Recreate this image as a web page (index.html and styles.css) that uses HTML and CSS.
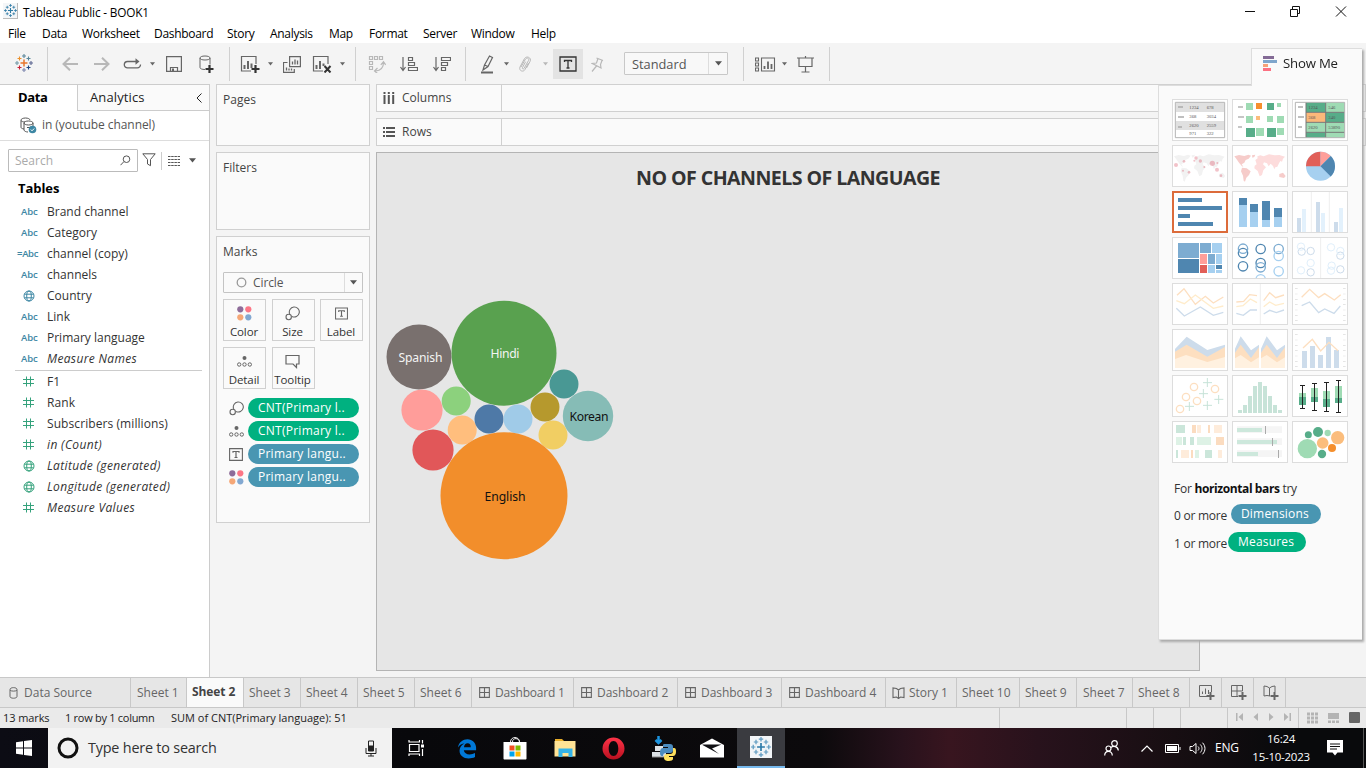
FILE: index.html
```html
<!DOCTYPE html>
<html lang="en">
<head>
<meta charset="utf-8">
<title>Tableau Public - BOOK1</title>
<link rel="stylesheet" href="styles.css">
</head>
<body>
<svg class="defs" width="0" height="0">
  <symbol id="tableau" viewBox="0 0 18 18"><g fill="none" stroke-width="1.100">
    <path class="c1" stroke-width="1.500" d="M9 5.500v7M5.500 9h7"/><path class="c2" d="M9 0v4M7 2h4"/><path class="c3" d="M9 14v4M7 16h4"/>
    <path class="c4" d="M2 7v4M0 9h4"/><path class="c5" d="M16 7v4M14 9h4"/><path class="c6" d="M4.500 2.500v4M2.500 4.500h4"/>
    <path class="c7" d="M13.500 2.500v4M11.500 4.500h4"/><path class="c8" d="M4.500 11.500v4M2.500 13.500h4"/><path class="c9" d="M13.500 11.500v4M11.500 13.500h4"/></g></symbol>
  <symbol id="caret" viewBox="0 0 6 4"><path d="M0 0h6L3 3.800z" fill="currentColor"/></symbol>
  <symbol id="grid" viewBox="0 0 12 12"><path d="M.7.7h10.600v10.600H.7zM6 .7v10.600M.7 6h10.600" fill="none" stroke="currentColor" stroke-width="1.200"/></symbol>
  <symbol id="book" viewBox="0 0 13 12"><path d="M4.500 10L1 10.500V1l3.500.5 2 1.500 2-1.500L12 1v9.500L8.500 10l-2 1.500zM6.500 3v8" fill="none" stroke="currentColor" stroke-width="1.100"/></symbol>
  <symbol id="hash" viewBox="0 0 11 11"><path d="M3.500 .5v10M7.500 .5v10M0 3.500h11M0 7.500h11" stroke="currentColor"/></symbol>
  <symbol id="globe" viewBox="0 0 12 12"><g fill="none" stroke="currentColor"><circle cx="6" cy="6" r="5"/><ellipse cx="6" cy="6" rx="2.300" ry="5"/><path d="M1.500 4.200h9M1.500 7.800h9"/></g></symbol>
  <symbol id="size" viewBox="0 0 15 15"><g fill="none" stroke="currentColor" stroke-width="1.100"><path d="M4.700 7.900A5 5 0 1 1 7 10.400"/><circle cx="3.700" cy="11" r="2.700"/></g></symbol>
  <symbol id="tbox" viewBox="0 0 14 13"><path d="M.6.600h12.800v11.800H.6z" fill="none" stroke="currentColor" stroke-width="1.100"/><path d="M4 4.800V3.500h6v1.300M7 3.500v6M5.500 9.500h3" fill="none" stroke="currentColor" stroke-width="1.200"/></symbol>
  <symbol id="detail" viewBox="0 0 15 11"><circle cx="7.500" cy="2" r="2" fill="currentColor"/><g fill="none" stroke="currentColor"><circle cx="2.200" cy="8.500" r="1.700"/><circle cx="7.500" cy="8.500" r="1.700"/><circle cx="12.800" cy="8.500" r="1.700"/></g></symbol>
  <symbol id="dots" viewBox="0 0 15 15"><circle cx="3.300" cy="3.300" r="3.100" fill="#8e6c99"/><circle cx="11.300" cy="3.300" r="3.100" fill="#fc7686"/><circle cx="3.300" cy="11.300" r="3.100" fill="#f5a777"/><circle cx="11.300" cy="11.300" r="3.100" fill="#82a8d1"/></symbol>
</svg>

<header class="titlebar">
  <span class="app-icon"><svg class="mono" width="13" height="13"><use href="#tableau"/></svg></span>
  <span class="app-title">Tableau Public - BOOK1</span>
  <svg class="win-btns" width="110" height="20" fill="none" stroke="#111"><path d="M3 9.500h10M48.500 7.500h7v7h-7zM50.500 7.500v-3h7v7h-2M94 4.500l10 10M104 4.500l-10 10"/></svg>
</header>
<nav class="menu"><span class="m1">File</span><span class="m2">Data</span><span class="m3">Worksheet</span><span class="m4">Dashboard</span><span class="m5">Story</span><span class="m6">Analysis</span><span class="m7">Map</span><span class="m8">Format</span><span class="m9">Server</span><span class="m10">Window</span><span>Help</span></nav>

<div class="toolbar">
  <div class="tgroup g0"><svg class="logo" width="18" height="18"><use href="#tableau"/></svg></div>
  <div class="tgroup g1">
    <i class="cell pale"><svg width="16" height="14"><path d="M16 7H1.500M8 .7L1.500 7 8 13.300" class="ln2"/></svg></i>
    <i class="cell pale"><svg width="16" height="14"><path d="M0 7h14.500M8 .7L14.500 7 8 13.300" class="ln2"/></svg></i>
    <i class="cell w29"><svg width="19" height="13"><path d="M13.500 3.500H4.500a3.200 3.200 0 0 0 0 6.400h9.800a3.200 3.200 0 0 0 3.200-3.400" class="ln" stroke-width="1.300"/><path d="M12.500 .2L16.500 3.500l-4 3.300z" fill="currentColor"/></svg></i>
    <i class="cell w11"><svg width="5" height="4"><use href="#caret"/></svg></i>
    <i class="cell"><svg width="16" height="16"><path d="M.6.600h14.800v14.800H.6zM4.500 15v-3.500h7V15" class="ln" stroke-width="1.200"/><path d="M6 12.500h2V15H6z" fill="currentColor"/></svg></i>
    <i class="cell"><svg width="16" height="18"><path d="M7 14.500c-3 0-5-.8-5-2V3c0-1.200 2-2 5-2s5 .8 5 2v6.500M2 3c0 1.300 2 2 5 2s5-.7 5-2" class="ln"/><path d="M11.500 10v8M7.500 14h8" stroke="#333" stroke-width="2.200"/></svg></i>
  </div>
  <div class="tgroup g2">
    <i class="cell"><svg width="20" height="18"><path d="M16 9V1.500H1.500V16H11" class="ln" stroke-width="1.200"/><path d="M4.500 14v-4M8 14V6M11.500 13V8.500" class="ln" stroke-width="2"/><path d="M15.500 10v8M11.500 14h8" stroke="#333" stroke-width="2.200"/></svg></i>
    <i class="cell w9"><svg width="5" height="4"><use href="#caret"/></svg></i>
    <i class="cell w33"><svg width="18" height="17"><path d="M6.600.600h10.800v10H6.600zM4.500 6.500h-4v9.900h10.800V13" class="ln" stroke-width="1.200"/><path d="M9.500 8.500v-3M12 8.500v-5M14.500 8.500v-4M3.500 14.500v-3M6 14.500v-2M8.500 14.500v-2" class="ln" stroke-width="1.300"/></svg></i>
    <i class="cell w28"><svg width="20" height="18"><path d="M16 9V1.500H1.500V16H11" class="ln" stroke-width="1.200"/><path d="M4.500 14v-4M8 14V6M11.500 11V8.500" class="ln" stroke-width="2"/><path d="M12.500 11l6 6.500M18.500 11l-6 6.500" stroke="#333" stroke-width="2"/></svg></i>
    <i class="cell w12"><svg width="5" height="4"><use href="#caret"/></svg></i>
  </div>
  <div class="tgroup g3">
    <i class="cell pale"><svg width="18" height="18"><path d="M1.500 1.500h3v3h-3zM6.500 1.500h3v3h-3zM11.500 1.500h3v3h-3zM1.500 6.500h3v3h-3zM1.500 11.500h3v3h-3zM15.500 7.500c0 5-3 8-8 8.500M12.800 9.800l2.700-3 2.200 3M9.500 13L6.500 16l3 2.500" class="ln" stroke-width="1.200"/></svg></i>
    <i class="cell"><svg width="18" height="16"><path d="M3 1v13M.5 11L3 14.500 5.500 11M8.500 1.500h4v3h-4zM8.500 6.500h6v3h-6zM8.500 11.500h9v3h-9z" class="ln" stroke-width="1.200"/></svg></i>
    <i class="cell w33"><svg width="18" height="16"><path d="M3 1v13M.5 11L3 14.500 5.500 11M8.500 1.500h9v3h-9zM8.500 6.500h6v3h-6zM8.500 11.500h4v3h-4z" class="ln" stroke-width="1.200"/></svg></i>
  </div>
  <div class="tgroup g4">
    <i class="cell w30"><svg width="14" height="19"><path d="M2 15l1.500-5L8.500 1l3 1.500L7 11.500zM3.500 10L7 11.500" class="ln" stroke-width="1.200"/><path d="M0 17.500h12" class="ln" stroke-width="2"/></svg></i>
    <i class="cell w6"><svg width="5" height="4"><use href="#caret"/></svg></i>
    <i class="cell pale"><svg width="14" height="17"><path d="M3 11l4.500-8c1.500-2 4-.5 3 1.500L6 12.500c-.8 1-2 .3-1.600-.8l3.200-6M10.500 7L7 13.500c-1.500 3-6.500 1.500-5-2.500L6.500 2.500c2-3 7.500-1 5.500 3L8.500 12" class="ln"/></svg></i>
    <i class="cell w9 pale"><svg width="5" height="4"><use href="#caret"/></svg></i>
    <i class="cell tbtn"><svg width="18" height="16" viewBox="0 0 18 16"><path d="M1 1h16v14H1z" class="ln" stroke-width="1.300"/><path d="M5.500 6V4.500h7V6M9 4.500V12M7.500 12h3" class="ln" stroke-width="1.300"/></svg></i>
    <i class="cell w29 pale"><svg width="13" height="15"><path d="M5.500 1l6.500 2.500M6.800 2L5.500 6 1.500 6.500 10 11 9.500 7.500 11 3.500M5.500 9L1 14.500" class="ln" stroke-width="1.200"/></svg></i>
    <div class="tselect"><span>Standard</span><b><svg width="7" height="5"><use href="#caret"/></svg></b></div>
  </div>
  <div class="tgroup g5">
    <i class="cell"><svg width="21" height="15"><path d="M.5 1h3v3h-3zM.5 6h3v3h-3zM.5 11h3v3h-3zM6.500 1h13v13h-13z" class="ln" stroke-width="1.100"/><path d="M9.500 12V9M13 12V4.500M16.500 12V7" class="ln" stroke-width="1.800"/></svg></i>
    <i class="cell w6"><svg width="5" height="4"><use href="#caret"/></svg></i>
    <i class="cell w37"><svg width="18" height="17"><path d="M0 2h17M8.500 0v2M2 2v8.500h13V2M8.500 10.500v5M4.500 16h8" class="ln" stroke-width="1.200"/></svg></i>
  </div>
</div>

<main class="work">
  <aside class="data">
    <div class="dtabs"><b>Data</b><span>Analytics<svg width="6" height="10"><path d="M5.500 .5L1 5l4.500 4.500" class="ln"/></svg></span></div>
    <div class="source"><svg width="17" height="17"><g class="ln"><path d="M4 12c-2-.3-3-1-3-1.500V3c0-1 2-2 4.500-2S10 2 10 3M1 3.500c.8 1 2 1.500 4 1.500M4 6c0-1.200 2-2 4.500-2s4.500.8 4.500 2-2 2-4.500 2S4 7.200 4 6zM4 6v7c0 1 2 2 4 2M13 6v3M7 10.500h3"/></g><circle cx="12.500" cy="12.500" r="3.800" fill="#3d87a4"/><path d="M10.800 12.500l1.200 1.300 2.200-2.300" stroke="#fff" fill="none"/></svg>in (youtube channel)</div>
    <div class="search">
      <div class="sbox"><span>Search</span><svg width="11" height="11"><circle cx="6.500" cy="4.200" r="3.300" class="ln"/><path d="M4 6.500L.5 10.200" class="ln"/></svg></div>
      <svg class="funnel" width="14" height="14"><path d="M.8.800h12.400L8.500 6.500v6.200L5.500 11V6.500z" class="ln"/></svg>
      <span class="vsep"></span>
      <svg class="list" width="12" height="10"><path d="M0 .5h12M0 3.500h12M0 6.500h12M0 9.500h12" stroke="#555" stroke-dasharray="2.500 .7"/></svg>
      <svg class="car" width="7" height="5"><use href="#caret"/></svg>
    </div>
    <h2>Tables</h2>
    <ul class="fields dim">
      <li><i>Abc</i>Brand channel</li><li><i>Abc</i>Category</li><li><i class="eq">=Abc</i>channel (copy)</li><li><i>Abc</i>channels</li>
      <li><i><svg width="12" height="12"><use href="#globe"/></svg></i>Country</li><li><i>Abc</i>Link</li><li><i>Abc</i>Primary language</li><li><i>Abc</i><em>Measure Names</em></li>
    </ul>
    <ul class="fields mea">
      <li><i><svg width="11" height="11"><use href="#hash"/></svg></i>F1</li>
      <li><i><svg width="11" height="11"><use href="#hash"/></svg></i>Rank</li>
      <li><i><svg width="11" height="11"><use href="#hash"/></svg></i>Subscribers (millions)</li>
      <li><i><svg width="11" height="11"><use href="#hash"/></svg></i><em>in (Count)</em></li>
      <li><i><svg width="12" height="12"><use href="#globe"/></svg></i><em>Latitude (generated)</em></li>
      <li><i><svg width="12" height="12"><use href="#globe"/></svg></i><em>Longitude (generated)</em></li>
      <li><i><svg width="11" height="11"><use href="#hash"/></svg></i><em>Measure Values</em></li>
    </ul>
  </aside>

  <section class="cards">
    <div class="card pages">Pages</div>
    <div class="card filters">Filters</div>
    <div class="card marks">Marks
      <div class="mselect"><svg width="11" height="11"><circle cx="5.500" cy="5.500" r="4.300" fill="none" stroke="#999" stroke-width="1.300"/></svg><span>Circle</span><b><svg width="7" height="5"><use href="#caret"/></svg></b></div>
      <div class="mbuttons">
        <div><svg width="15" height="15"><use href="#dots"/></svg>Color</div>
        <div><svg width="15" height="15"><use href="#size"/></svg>Size</div>
        <div><svg width="13" height="15"><use href="#tbox"/></svg>Label</div>
        <div><svg width="15" height="15"><use href="#detail"/></svg>Detail</div>
        <div><svg width="15" height="15"><path d="M1 1.500h13V10h-2.500v3.500L8 10H1z" class="ln" stroke-width="1.200"/></svg>Tooltip</div>
      </div>
      <div class="pills">
        <svg width="15" height="15"><use href="#size"/></svg><span class="pill green">CNT(Primary l..</span>
        <svg width="15" height="11"><use href="#detail"/></svg><span class="pill green">CNT(Primary l..</span>
        <svg width="14" height="13"><use href="#tbox"/></svg><span class="pill blue">Primary langu..</span>
        <svg width="15" height="15"><use href="#dots"/></svg><span class="pill blue">Primary langu..</span>
      </div>
    </div>
  </section>

  <section class="view">
    <div class="shelf"><span><svg width="12" height="12"><path d="M1.500 0v2M5.800 0v2M10.200 0v2M1.500 3v9M5.800 3v9M10.200 3v9" stroke="#555" stroke-width="2"/></svg>Columns</span></div>
    <div class="shelf"><span><svg width="12" height="10"><path d="M0 1h2M0 5h2M0 9h2M3 1h9M3 5h9M3 9h9" stroke="#555" stroke-width="2"/></svg>Rows</span></div>
    <div class="canvas">
      <h1>NO OF CHANNELS OF LANGUAGE</h1>
      <svg class="bubbles" width="822" height="462" viewBox="377 208 822 462">
        <circle cx="419" cy="357" r="32.500" fill="#79706e"/><circle cx="504" cy="353.200" r="52.500" fill="#59a14f"/>
        <circle cx="422" cy="410" r="20.600" fill="#ff9d9a"/><circle cx="456.200" cy="401" r="14.500" fill="#8cd17d"/>
        <circle cx="433" cy="450" r="20.600" fill="#e15759"/><circle cx="462.200" cy="430" r="14.500" fill="#ffbe7d"/>
        <circle cx="489" cy="419" r="14.500" fill="#4e79a7"/><circle cx="518" cy="419" r="14.500" fill="#a0cbe8"/>
        <circle cx="545" cy="407" r="14.500" fill="#b6992d"/><circle cx="553" cy="435" r="14.500" fill="#f1ce63"/>
        <circle cx="564" cy="384" r="14.500" fill="#499894"/><circle cx="588" cy="416" r="25.200" fill="#86bcb6"/>
        <circle cx="504" cy="495.700" r="63.500" fill="#f28e2b"/>
        <g class="blabels"><text x="420.500" y="362" textLength="44" class="lt">Spanish</text><text x="505" y="358" textLength="29" class="lt">Hindi</text><text x="589" y="421" textLength="39">Korean</text><text x="505" y="501" textLength="41">English</text></g>
      </svg>
    </div>
  </section>
</main>

<aside class="showme">
  <div class="sm-tab"><svg width="14" height="15"><path d="M0 1.500h11" stroke="#846b96" stroke-width="3"/><path d="M0 5.500h14" stroke="#7fa6cc" stroke-width="3"/><path d="M0 9.500h5" stroke="#f6a177" stroke-width="3"/><path d="M0 13.500h8" stroke="#fc7182" stroke-width="3"/></svg>Show Me</div>
  <div class="sm-body">
    <div class="thumbs">
      <svg viewBox="39 180 162 120"><path d="M46 187h148v106H46z" fill="#fff" stroke="#b4b4b4" stroke-width="3"/><path d="M48 189h144v27H48zM48 243h144v27H48z" fill="#e0e0e0"/><path d="M54 201h15M54 231h18M54 261h12" stroke="#aaa" stroke-width="5"/><g class="tt"><text x="88" y="207">1234</text><text x="140" y="207">678</text><text x="88" y="235">368</text><text x="140" y="235">3034</text><text x="88" y="262">2620</text><text x="140" y="262">2559</text><text x="88" y="286">971</text><text x="140" y="286">322</text></g></svg>
      <svg viewBox="219 180 162 120"><path d="M234 201h15M234 231h18M234 261h12" stroke="#b4b4b4" stroke-width="5"/><path d="M258 189h21v21h-21zM351 189h12v12h-12zM258 228h21v21h-21zM321 228h18v18h-18zM351 228h21v21h-21zM288 264h24v24h-24zM351 264h21v21h-21z" fill="#9fdbb4"/><path d="M321 189h21v21h-21zM258 264h27v27h-27zM321 264h27v27h-27z" fill="#57ad89"/><path d="M288 189h18v18h-18z" fill="#f58f2d"/><path d="M288 228h12v12h-12z" fill="#fbbd7c"/></svg>
      <svg viewBox="399 180 162 120"><path d="M438 187h59v30h-59zM498 217h56v30h-56zM438 277h59v16h-59z" fill="#57ad89"/><path d="M498 187h56v30h-56zM438 247h59v30h-59zM498 247h56v30h-56zM498 277h56v16h-56z" fill="#9fdbb4"/><path d="M438 217h59v30h-59z" fill="#fbb87a"/><path d="M438 187v106M497 187v106M438 217h116M438 247h116M438 277h116" stroke="#777" stroke-width="3"/><path d="M406 187h148v106H406z" fill="none" stroke="#b4b4b4" stroke-width="3"/><path d="M414 201h15M414 231h18M414 261h12" stroke="#aaa" stroke-width="5"/><g class="tt"><text x="445" y="206">1234</text><text x="505" y="206">546</text><text x="445" y="238">368</text><text x="505" y="238">340</text><text x="445" y="267">2620</text><text x="505" y="267">53890</text></g></svg>
      <svg viewBox="39 318 162 120"><path d="M42 349l14-4 16 3 12-4 8 3-7 9-9 4-4 8-8 5 5 7-4-1-9-11-6-9zM65 383l14 2 12 9-5 11-8 8-4 12-4-3-2-15-6-13zM95 346l10-2-3 7-6 2zM107 366l-2-6 7-5-1-6 9-3 10 3 16-6 17 3 14-1 17 5-6 6-3 9-5-2-4 7-5 10-6 2-3 6-4-10-7-7-6 8-5-9-9-3-3 6 9 9-8 9-4 14-7 4-6-16-10-8 1-8 6-4zM177 402l11-4 8 10-5 6-14-3z" fill="#f2f2f2"/><g fill="#d7394f" opacity=".3"><circle cx="48" cy="375" r="6"/><circle cx="72" cy="364" r="4"/><circle cx="69" cy="392" r="3"/><circle cx="87" cy="397" r="4"/><circle cx="108" cy="354" r="5"/><circle cx="103" cy="362" r="3"/><circle cx="121" cy="363" r="5"/><circle cx="133" cy="381" r="3"/><circle cx="157" cy="370" r="8"/><circle cx="172" cy="369" r="3"/><circle cx="171" cy="389" r="6"/><circle cx="183" cy="407" r="4"/></g></svg>
      <svg viewBox="219 318 162 120"><path transform="translate(181 0)" d="M42 349l14-4 16 3 12-4 8 3-7 9-9 4-4 8-8 5 5 7-4-1-9-11-6-9zM65 383l14 2 12 9-5 11-8 8-4 12-4-3-2-15-6-13zM95 346l10-2-3 7-6 2z" fill="#f6ccca"/><path transform="translate(181 0)" d="M107 366l-2-6 7-5-1-6 9-3 10 3 16-6 17 3 14-1 17 5-6 6-3 9-5-2-4 7-5 10-6 2-3 6-4-10-7-7-6 8-5-9-9-3-3 6 9 9-8 9-4 14-7 4-6-16-10-8 1-8 6-4z" fill="#fddcdc"/><path d="M358 402l11-4 8 10-5 6-14-3z" fill="#f6ccca"/></svg>
      <svg viewBox="399 318 162 120"><circle cx="481.500" cy="379" r="43.500" fill="#a6d0f0"/><path d="M481.500 379h-43.500a43.500 43.500 0 0 1 43.500-43.500z" fill="#e15f58"/><path d="M481.500 379v-43.500a43.500 43.500 0 0 1 30.800 12.700z" fill="#ff9f9a"/><path d="M481.500 379l30.800-30.800a43.500 43.500 0 0 1 0 61.600z" fill="#4f86b0"/></svg>
      <svg class="sel" viewBox="42 459 156 114"><path d="M54 480h72M54 504h132M54 528h36M54 552h105" stroke="#4f86b0" stroke-width="12"/></svg>
      <svg viewBox="219 456 162 120"><path d="M237 474h24v87h-24zM270 492h24v69h-24zM306 483h24v78h-24zM342 504h24v57h-24z" fill="#4f86b0"/><path d="M237 495h24v66h-24zM270 516h24v45h-24zM306 540h24v21h-24zM342 531h24v30h-24z" fill="#a6d0f0"/></svg>
      <svg viewBox="399 456 162 120"><path d="M454 456v120M508 456v120" stroke="#eee" stroke-width="3"/><path d="M411 534h12v42h-12zM468 486h12v90h-12zM522 546h12v30h-12z" fill="#cddceb"/><path d="M426 507h12v69h-12zM483 519h12v57h-12zM537 504h12v72h-12z" fill="#e3f1fc"/></svg>
      <svg viewBox="39 594 162 120"><path d="M54 609h63v45H54zM120 609h33v30h-33zM144 642h21v30h-21z" fill="#7dacd1"/><path d="M54 657h63v42H54zM168 675h18v12h-18z" fill="#4f86b0"/><path d="M156 609h30v30h-30zM168 642h18v30h-18zM144 675h21v24h-21zM168 690h18v9h-18z" fill="#a6d0f0"/><path d="M120 642h21v30h-21z" fill="#ff9f9a"/><path d="M120 675h21v24h-21z" fill="#e15f58"/></svg>
      <svg viewBox="219 594 162 120"><g fill="none" stroke-width="4"><g stroke="#4f86b0"><circle cx="249" cy="639" r="14"/><circle cx="249" cy="679" r="14"/><circle cx="302" cy="627" r="14"/><circle cx="302" cy="669" r="14"/></g><g stroke="#7dacd1"><circle cx="249" cy="626" r="14"/><circle cx="356" cy="627" r="14"/><circle cx="302" cy="682" r="14"/></g><g stroke="#a6d0f0"><circle cx="356" cy="648" r="14"/><circle cx="356" cy="694" r="14"/><circle cx="302" cy="718" r="14"/></g></g></svg>
      <svg viewBox="399 594 162 120"><path d="M482 594v120" stroke="#eee" stroke-width="3"/><g fill="none" stroke-width="3"><g stroke="#cddceb"><circle cx="425" cy="635" r="11"/><circle cx="452" cy="633" r="11"/><circle cx="452" cy="697" r="11"/><circle cx="541" cy="647" r="11"/><circle cx="541" cy="688" r="11"/></g><g stroke="#e0effb"><circle cx="423" cy="620" r="11"/><circle cx="452" cy="669" r="11"/><circle cx="423" cy="691" r="11"/><circle cx="513" cy="622" r="11"/><circle cx="541" cy="633" r="11"/><circle cx="515" cy="677" r="11"/><circle cx="513" cy="692" r="11"/></g></g></svg>
      <svg viewBox="39 12 162 120"><g class="tl"><path class="o" d="M51 46l21-20 34 47 30-24 24 20 30-18"/><path class="y" d="M49 62l24 9 33-26 54 40 30-7"/><path class="b" d="M49 85l24 23 48-27 39 25 30-9"/></g></svg>
      <svg viewBox="219 12 162 120"><path d="M301 12v120" stroke="#eee" stroke-width="3"/><g class="tl"><path class="o" d="M229 66l22-2 18-20 22 3M311 62l18-24 18 15 25-8"/><path class="y" d="M229 80l20-3 22-20 20 11M311 80l18-14 18 10 25-6"/><path class="b" d="M229 100l21 6 21-16h20M311 102l18-11 20 7 23-8"/></g></svg>
      <svg viewBox="399 12 162 120"><path d="M409 25v100M553 25v100" stroke="#ddd" stroke-width="8" stroke-dasharray="2 14"/><g class="tl"><path class="o" d="M425 52l24-24 27 25 18-12 29 19 19-16"/><path class="b" d="M425 77l24-11 27 32 18-11 28 13 19-22"/></g></svg>
      <svg viewBox="39 150 162 120"><path d="M45 207l35-37 62 40 53-16v70H45z" fill="#cddceb"/><path d="M45 215l35-21 62 36 53-29v63H45z" fill="#fddfc0"/><path d="M45 237l33-12 64 21 53-15v33H45z" fill="#fff1e0"/></svg>
      <svg viewBox="219 150 162 120"><g id="area"><path d="M225 206l17-37 31 42 24-17v70h-72z" fill="#cddceb"/><path d="M225 218l17-24 31 40 24-32v62h-72z" fill="#fddfc0"/><path d="M225 235l17-10 31 22 24-15v32h-72z" fill="#fff1e0"/></g><use href="#area" x="78"/></svg>
      <svg viewBox="399 150 162 120"><path d="M409 163v100M553 163v100" stroke="#ddd" stroke-width="8" stroke-dasharray="2 14"/><path d="M426 213h15v51h-15zM450 198h15v66h-15zM474 225h15v39h-15zM498 171h15v93h-15zM522 210h15v54h-15z" fill="#cddceb"/><g class="tl"><path class="o" d="M429 204l28-26 25 35 25-26 27 25"/></g></svg>
      <svg viewBox="39 288 162 120"><g fill="none" stroke="#fddfc0" stroke-width="4"><circle cx="102" cy="321" r="11"/><circle cx="165" cy="327" r="11"/><circle cx="78" cy="351" r="11"/><circle cx="111" cy="363" r="11"/><circle cx="60" cy="387" r="11"/></g><path d="M142 294v27M129 308h27M130 327v27M117 341h27M176 345v27M163 358h27M142 363v27M129 376h27M88 366v27M75 379h27" stroke="#c7e3d8" stroke-width="3"/></svg>
      <svg viewBox="219 288 162 120"><path d="M234 390h12v9h-12zM249 375h12v24h-12zM264 348h12v51h-12zM279 318h12v81h-12zM294 306h12v93h-12zM309 318h12v81h-12zM324 348h12v51h-12zM339 375h12v24h-12zM354 390h12v9h-12z" fill="#c7e3d8"/></svg>
      <svg viewBox="399 288 162 120"><path d="M417 339h21v12h-21zM453 324h21v27h-21zM489 333h21v24h-21zM525 318h21v36h-21z" fill="#9fdbb4"/><path d="M417 351h21v24h-21zM453 351h21v15h-21zM489 357h21v24h-21zM525 354h21v15h-21z" fill="#57ad89"/><path d="M427.500 317v68M420 316.500h15M420 385.500h15M463.500 311v80M456 310.500h15M456 391.500h15M499.500 308v86M492 307.500h15M492 394.500h15M535.500 302v95M528 301.500h15M528 397.500h15" stroke="#222" stroke-width="3"/></svg>
      <svg viewBox="39 426 162 120"><path d="M48 435h27v24H48zM69 471h9v24h-9zM90 471h12v24H90zM48 510h6v24h-6zM135 510h21v24h-21z" fill="#cbe6da"/><path d="M48 471h18v24H48zM111 471h42v24h-42zM105 510h12v24h-12z" fill="#def2e6"/><path d="M96 435h12v24H96zM144 435h6v24h-6zM168 471h24v24h-24zM93 510h6v24h-6z" fill="#fbdcc0"/><path d="M111 435h12v24h-12zM162 435h24v24h-24zM63 510h24v24H63zM174 510h12v24h-12z" fill="#feecdb"/></svg>
      <svg viewBox="219 426 162 120"><path d="M231 449h135M231 485h135M231 521h135" stroke="#f5f5f5" stroke-width="20"/><path d="M231 450h75M231 486h120M231 522h63" stroke="#cde8dc" stroke-width="12"/><path d="M316.500 438v24M337.500 474v24M355.500 510v24" stroke="#aaa" stroke-width="3"/></svg>
      <svg viewBox="399 426 162 120"><g fill="#57ad89"><circle cx="445" cy="464" r="10.500"/><circle cx="474" cy="456" r="15"/><circle cx="486" cy="522" r="12.500"/></g><g fill="#9fdbb4"><circle cx="442" cy="506" r="29"/><circle cx="503" cy="459" r="9.500"/></g><g fill="#fbbd7c"><circle cx="533" cy="473" r="20"/><circle cx="488" cy="489" r="17.500"/></g><circle cx="516" cy="504" r="12" fill="#f58f2d"/></svg>
    </div>
    <p class="hint">For <b>horizontal bars</b> try</p>
    <p class="hint need">0 or more <span class="pill blue">Dimensions</span></p>
    <p class="hint need n1">1 or more <span class="pill green">Measures</span></p>
  </div>
</aside>

<div class="tabs">
  <span class="src"><svg width="9" height="12"><path d="M1 2.500C1 0 8 0 8 2.500v7c0 2.300-7 2.300-7 0zM1 3c.5 1.500 6.500 1.500 7 0" class="ln"/></svg>Data Source</span>
  <span class="t56">Sheet 1</span><span class="active">Sheet 2</span><span>Sheet 3</span><span>Sheet 4</span><span>Sheet 5</span><span>Sheet 6</span>
  <span class="dash first"><svg width="11" height="11"><use href="#grid"/></svg>Dashboard 1</span><span class="dash"><svg width="11" height="11"><use href="#grid"/></svg>Dashboard 2</span><span class="dash"><svg width="11" height="11"><use href="#grid"/></svg>Dashboard 3</span><span class="dash"><svg width="11" height="11"><use href="#grid"/></svg>Dashboard 4</span>
  <span class="story"><svg width="13" height="12"><use href="#book"/></svg>Story 1</span><span class="t63">Sheet 10</span><span>Sheet 9</span><span class="t56">Sheet 7</span><span>Sheet 8</span>
  <span class="add"><svg width="16" height="15"><path d="M12.500 7V.5H.5v11H8" class="ln"/><path d="M3.500 9V6.500M6.500 9V3.500M9.500 9V5" class="ln"/><path d="M11.500 7v8M7.500 11h8" class="ln" stroke-width="2"/></svg></span>
  <span class="add"><svg width="16" height="15"><path d="M11.500 6V.5H.5v11H7M6 .5v11M.5 6h11" class="ln"/><path d="M11.500 7v8M7.500 11h8" class="ln" stroke-width="2"/></svg></span>
  <span class="add"><svg width="16" height="15"><path d="M7 11L4 10.500 1 11V1l3 .5L6.500 3 9 1.500l3-.5v6M6.500 3v8" class="ln"/><path d="M11.500 7v8M7.500 11h8" class="ln" stroke-width="2"/></svg></span>
</div>

<div class="status">
  <span class="s1">13 marks</span><span class="s2">1 row by 1 column</span><span class="s3">SUM of CNT(Primary language): 51</span>
  <i class="b1"></i><i class="b2"></i><i class="b3"></i><i class="b4"></i>
  <div class="nav"><svg width="56" height="8" fill="#b4b4b4"><path d="M0 0h1.500v8H0zM7 0v8L2.500 4zM22 0v8L17.500 4zM33 0v8l4.500-4zM48 0v8l4.500-4zM53.500 0H55v8h-1.500z"/></svg></div>
  <div class="modes"><svg width="54" height="12"><path d="M0 2h11M0 6h11M0 10h11" stroke="#b4b4b4" stroke-width="3" stroke-dasharray="3 1"/><path d="M21 1h11v6H21z" fill="#b4b4b4"/><path d="M21 9.800h11" stroke="#b4b4b4" stroke-width="2.500" stroke-dasharray="3 1"/><rect x="42" y="0" width="11" height="11" rx="1" fill="#666"/></svg></div>
</div>

<footer class="taskbar">
  <div class="start"><svg width="16" height="16" fill="#fff"><path d="M0 2.300l7-1V7.500H0zM8 1.100L16 0v7.500H8zM0 8.500h7v6.200l-7-1zM8 8.500h8V16l-8-1.100z"/></svg></div>
  <div class="tsearch"><svg width="22" height="22"><circle cx="11" cy="11" r="9" fill="none" stroke="#111" stroke-width="3"/></svg><span>Type here to search</span>
    <svg class="mic" width="12" height="17"><path d="M3.500 1h5v10h-5z" class="ln"/><path d="M3 5.500h6V11H3z" fill="#222"/><path d="M1 8v5.500h10V8M6 13.500V16M3 16h6" fill="none" stroke="#222"/></svg></div>
  <i class="app"><svg width="18" height="16" fill="none" stroke="#fff" stroke-width="1.200"><path d="M1.500 4.500h9.500v7H1.500zM1 0v2h10.500V0M1 16v-2h10.500v2M14.500 0v3.500M14.500 9v7"/><path d="M13 4.500h3v3h-3z" fill="#fff" stroke="none"/></svg></i>
  <i class="app edge"><svg width="20" height="21" viewBox="0 0 22 22"><path d="M1 10C2 4 6.500.8 11.500.8 17 .8 21 5 21 10v3H7.500c.3 3 3 4.600 6.300 4.600 2.300 0 4.200-.6 6-1.600v4.300c-2 1.100-4.500 1.600-7 1.600C7 21.900 2.800 18.500 2.800 13.400c0-3.600 2-6.300 5.400-7.900C5.500 5.700 2.800 7 1 10zM7.700 9.500h7.500C15.200 7 14 5.300 11.700 5.300 9.400 5.300 8 7 7.700 9.500z" fill="#0078d7"/></svg></i>
  <i class="app"><svg width="24" height="24"><path d="M7.500 6c0-6 9-6 9 0M9.500 6c0-5 7-4 7 0" fill="none" stroke="#eee"/><path d="M.5 6h23v16.500c0 .8-.5 1-1 1h-21c-.5 0-1-.3-1-1z" fill="#fff"/><path d="M6.500 9.500h5v5h-5z" fill="#f25022"/><path d="M12.500 9.500h5v5h-5z" fill="#7fba00"/><path d="M6.500 15.500h5v5h-5z" fill="#00a4ef"/><path d="M12.500 15.500h5v5h-5z" fill="#ffb900"/></svg></i>
  <i class="app"><svg width="22" height="20"><path d="M1 1h7l2 2h10v15H1z" fill="#e8ad29"/><path d="M.5 3h21v15.500H.5z" fill="#ffe395"/><path d="M4.500 19v-8.500h14V19h-4v-4h-6v4z" fill="#34b3e8"/></svg></i>
  <i class="app"><svg width="23" height="23"><defs><linearGradient id="op" x2="0" y2="1"><stop stop-color="#ff3348"/><stop offset="1" stop-color="#b8101f"/></linearGradient></defs><path fill-rule="evenodd" fill="url(#op)" d="M11.500.5a11 11 0 1 0 0 22 11 11 0 0 0 0-22zm0 3.500c3 0 4.800 3.200 4.800 7.500s-1.800 7.500-4.800 7.500-4.800-3.200-4.800-7.500S8.500 4 11.500 4z"/></svg></i>
  <i class="app"><svg width="25" height="25"><path d="M1 16h14v5H1zM4 10h8v5H4z" fill="#dce1e5"/><path d="M1 21h14" stroke="#888"/><path d="M7.500 0v6M4.500 4L7.500 7l3-3" stroke="#1c94df" stroke-width="2.500" fill="none"/><path d="M14 8h5c2 0 3 1 3 3v3c0 2-1 3-3 3h-4c-2 0-3 1-3 3h-1c-2 0-2-2-2-4s1-4 3-4h5v-1h-5v-2c0-1 1-1 2-1z" fill="#4b8bbe"/><path d="M22 12h1c2 0 2 2 2 4s-1 4-3 4h-4v1h4v2c0 1-2 2-4 2s-5-.5-5-3c0-3 1-4 3-4h3c2 0 3-1 3-3z" fill="#ffe15e"/></svg></i>
  <i class="app"><svg width="24" height="20"><path d="M0 7L12 .5 24 7v12.500H0z" fill="#fff"/><path d="M2.500 6.500h19L12 10.500l7 5.500L2.500 7z" fill="#101014"/></svg></i>
  <i class="app current"><b><svg class="soft" width="20" height="20"><use href="#tableau"/></svg></b></i>
  <div class="tray">
    <svg class="people" width="15" height="16" fill="none" stroke="#fff" stroke-width="1.200"><circle cx="10.500" cy="3.500" r="2.800"/><circle cx="4.500" cy="8.500" r="2.500"/><path d="M.7 15.500c0-5.500 7.600-5.500 7.600 0M7 7.500c2-2 7-1.500 7.300 3"/></svg>
    <svg class="up" width="12" height="7"><path d="M.5 6.500L6 1l5.500 5.500" fill="none" stroke="#fff" stroke-width="1.200"/></svg>
    <svg class="bat" width="16" height="9"><path d="M.5.500h13v8H.5zM15 3v3" fill="none" stroke="#fff"/><path d="M2 2h10v5H2z" fill="#fff"/></svg>
    <svg class="vol" width="17" height="13" fill="none" stroke="#fff"><path d="M1 4.500h2.500L7 1.500v10l-3.500-3H1zM9 4.500c1.300 1.300 1.300 2.700 0 4M11.300 2.500c2.300 2.500 2.300 5.500 0 8M13.500.700c3.300 3.500 3.300 8 0 11.600"/></svg>
    <span class="lang">ENG</span>
    <span class="clock">16:24<br>15-10-2023</span>
    <svg class="note" width="16" height="16"><path d="M0 0h16v12.500h-5.500L8 15.500l-2.500-3H0z" fill="#fff"/><path d="M3 4h10M3 6.500h10M3 9h7" stroke="#111"/></svg>
    <span class="peek"></span>
  </div>
</footer>
</body>
</html>
```

FILE: styles.css
```css
* { box-sizing: border-box; }
body { margin: 0; width: 1366px; height: 768px; overflow: hidden; display: flex; flex-direction: column; position: relative; background: #f4f4f4; color: #333; font: 12px/16px "Open Sans", "Noto Sans", sans-serif; }
svg { display: block; flex: none; }
.defs { position: absolute; }
i, em { font-style: normal; }
h1, h2, p, ul { margin: 0; padding: 0; list-style: none; }
.ln { fill: none; stroke: currentColor; }
.ln2 { fill: none; stroke: currentColor; stroke-width: 2; }

/* Tableau mark: each cross takes its own colour, or the current one */
.c1 { stroke: var(--c1, currentColor); } .c2 { stroke: var(--c2, currentColor); } .c3 { stroke: var(--c3, currentColor); }
.c4 { stroke: var(--c4, currentColor); } .c5 { stroke: var(--c5, currentColor); } .c6 { stroke: var(--c6, currentColor); }
.c7 { stroke: var(--c7, currentColor); } .c8 { stroke: var(--c8, currentColor); } .c9 { stroke: var(--c9, currentColor); }
.logo { --c1: #e8762b; --c2: #5b879b; --c3: #7b84ad; --c4: #7199a6; --c5: #5b6591; --c6: #eb912c; --c7: #59879b; --c8: #c72035; --c9: #1f447e; }
.mono { color: #2f7ba6; }
.soft { color: #5d9ac0; --c1: #2d7aa8; }

/* Title bar and menu */
.titlebar { height: 24px; flex: none; background: #fff; display: flex; align-items: center; color: #000; }
.app-icon { width: 15px; height: 16px; margin: -2px 5px 0 3px; display: grid; place-items: center; background: #f4f6f8; border: solid #bbb; border-width: 0 1px 1px 0; }
.app-title { font-size: 11.8px; letter-spacing: -.18px; }
.win-btns { margin-left: auto; margin-right: 14px; }
.menu { height: 19px; flex: none; background: #fff; padding-left: 8px; display: flex; color: #000; font-size: 12px; letter-spacing: -.3px; line-height: 19px; white-space: nowrap; }
.m1 { width: 34px; } .m2 { width: 40px; } .m3 { width: 72px; } .m4 { width: 73px; } .m5 { width: 43px; } .m6 { width: 59px; } .m7 { width: 40px; } .m8 { width: 54px; } .m9 { width: 48px; } .m10 { width: 60px; }

/* Toolbar */
.toolbar { height: 41px; flex: none; display: flex; color: #666; padding-bottom: 3px; }
.tgroup { display: flex; align-items: center; border-right: 1px solid #d0d0d0; margin-top: 4px; }
.g0 { width: 48px; padding-left: 15px; }
.g0 .logo { margin-top: -2px; }
.g1 { width: 182px; padding-left: 6px; } .g2 { width: 126px; padding-left: 4px; } .g3 { width: 110px; padding-left: 5px; } .g4 { width: 278px; padding-left: 7px; } .g5 { width: 86px; padding-left: 5px; }
.cell { width: 32px; display: grid; place-items: center; }
.w6 { width: 6px; } .w9 { width: 9px; } .w11 { width: 11px; } .w12 { width: 12px; } .w28 { width: 28px; } .w29 { width: 29px; } .w30 { width: 30px; } .w33 { width: 33px; } .w37 { width: 37px; }
.pale { color: #b8b8b8; }
.tbtn { width: 30px; height: 30px; margin-left: 3px; background: #e3e3e3; color: #333; }
.tselect { width: 104px; height: 23px; margin: -1px 0 0 12px; border: 1px solid #c8c8c8; border-radius: 1px; background: #f8f8f8; display: flex; align-items: center; color: #555; font-size: 12.8px; padding-left: 7px; }
.tselect b, .mselect b { margin-left: auto; width: 19px; align-self: stretch; display: grid; place-items: center; border-left: 1px solid #ddd; }

/* Workspace */
.work { height: 593px; flex: none; display: flex; }
.data { width: 210px; background: #fff; border: solid #ccc; border-width: 1px 1px 0 0; flex: none; }
.dtabs { height: 26px; display: flex; font-size: 13px; line-height: 25px; color: #000; }
.dtabs b { width: 77px; padding-left: 18px; letter-spacing: -.35px; }
.dtabs span { flex: 1; border: solid #ccc; border-width: 0 0 1px 1px; background: #fafafa; padding: 0 7px 0 12px; display: flex; align-items: center; justify-content: space-between; color: #222; letter-spacing: .12px; }
.source { height: 30px; border-bottom: 1px solid #ddd; padding: 0 0 1px 20px; display: flex; align-items: center; gap: 5px; color: #555; letter-spacing: -.06px; }
.search { height: 39px; padding: 0 0 0 8px; display: flex; align-items: center; }
.sbox { width: 130px; height: 23px; border: 1px solid #bbb; border-radius: 1px; display: flex; align-items: center; justify-content: space-between; padding: 0 6px 0 6px; color: #aaa; }
.sbox svg, .funnel, .car { color: #555; }
.funnel { margin: -1px 0 0 4px; }
.vsep { width: 1px; height: 18px; background: #ccc; margin: 0 6px 0 5px; }
.car { margin-left: 9px; }
h2 { font-size: 13px; line-height: 17px; letter-spacing: -.05px; margin: 0 0 4px 18px; color: #000; }
.fields { color: #333; }
.fields li { height: 21px; line-height: 21px; display: flex; white-space: nowrap; }
.fields li > i { width: 47px; display: flex; align-items: center; padding-left: 21px; font-size: 9.5px; font-weight: 600; letter-spacing: -.1px; flex: none; }
.fields li > i.eq { padding-left: 17px; letter-spacing: -.3px; }
.fields li > i svg { margin-left: 2px; }
.fields em { font-style: italic; letter-spacing: .35px; }
.dim i { color: #3d87a4; }
.mea { margin: 1px 7px 0 15px; border-top: 1px solid #ccc; letter-spacing: .08px; }
.mea li { margin-left: -15px; }
.mea i { color: #35a27c; }

.cards { width: 154px; margin-left: 6px; flex: none; display: flex; flex-direction: column; gap: 6px; }
.card { background: #fafafa; border: 1px solid #d0d0d0; padding: 7px 6px; color: #444; }
.pages { height: 62px; } .filters { height: 78px; } .marks { height: 287px; }
.mselect { height: 21px; width: 140px; margin-top: 12px; border: 1px solid #c4c4c4; border-radius: 1px; display: flex; align-items: center; padding-left: 12px; gap: 6px; color: #555; letter-spacing: -.1px; }
.mselect b { width: 18px; }
.mbuttons { display: grid; grid-template-columns: repeat(3, 43px); gap: 6px 5.500px; margin-top: 6px; }
.mbuttons div { height: 42px; border: 1px solid #d0d0d0; display: flex; flex-direction: column; align-items: center; padding: 6px 1px 0 0; gap: 3px; font-size: 11.5px; letter-spacing: -.1px; color: #333; }
.mbuttons svg { color: #666; }
.pills { margin-top: 9px; display: grid; grid-template-columns: 27px 111px; row-gap: 3px; align-items: center; justify-items: center; margin-left: -2px; color: #666; }
.pills svg { margin-left: 3px; }
.pill { height: 20px; border-radius: 10px; color: #fff; line-height: 19px; padding-left: 10px; white-space: nowrap; display: inline-block; letter-spacing: .25px; }
.pills .pill { width: 111px; }
.green { background: #00b180; } .blue { background: #4996b2; }

.view { flex: 1; margin-left: 6px; display: flex; flex-direction: column; gap: 6px; }
.shelf { height: 28px; background: #fafafa; border: 1px solid #d0d0d0; display: flex; }
.shelf span { width: 125px; border-right: 1px solid #d0d0d0; display: flex; align-items: center; padding-left: 6px; gap: 7px; color: #444; }
.canvas { width: 824px; height: 519px; background: #e6e6e6; border: 1px solid #b4b4b4; }
h1 { height: 55px; padding-top: 9px; font-size: 19.6px; line-height: 32px; text-align: center; letter-spacing: -.56px; color: #333; }
.blabels { font: 12.200px "Noto Sans", sans-serif; text-anchor: middle; fill: #111; }
.blabels .lt { fill: #f4f4f4; }

/* Show Me floats over the workspace */
.showme { position: absolute; left: 1158px; top: 48px; width: 204px; height: 592px; display: flex; flex-direction: column; filter: drop-shadow(2px 2px 1px #aaa); }
.sm-tab { height: 38px; margin: 0 0 -1px 93px; position: relative; background: #fafafa; border: solid #ddd; border-width: 1px 0 0 1px; display: flex; gap: 6px; padding: 7px 0 0 11px; font-size: 13.200px; letter-spacing: -.2px; line-height: 15px; color: #222; }
.sm-body { flex: 1; background: #fafafa; border: 1px solid #ddd; border-right: 0; padding: 13px 0 0 13px; }
.thumbs { display: grid; grid-template-columns: repeat(3, 56px); gap: 4px; }
.thumbs svg { width: 56px; height: 42px; border: 1px solid #ddd; background: #fff; }
.thumbs .sel { border: 2px solid #dc6b3a; }
.tt { font: 14px "Liberation Serif", serif; fill: #555; }
.tl { fill: none; stroke-width: 4; }
.o { stroke: #fddfc0; } .y { stroke: #ffeccb; } .b { stroke: #cddceb; }
.hint { margin: 18px 0 7px 2px; letter-spacing: -.25px; color: #333; }
.hint b { color: #111; letter-spacing: -.4px; }
.need { margin: 0 0 8px 2px; height: 20px; line-height: 24px; white-space: nowrap; display: flex; gap: 4px; }
.n1 { gap: 1px; }
.need .pill { padding: 0 12px 0 10px; letter-spacing: .2px; }

/* Sheet tabs */
.tabs { height: 31px; flex: none; display: flex; background: #e6e6e6; border: solid #c8c8c8; border-width: 1px 0; color: #666; line-height: 29px; }
.tabs span { width: 57px; flex: none; border-right: 1px solid #c8c8c8; padding-left: 5px; white-space: nowrap; display: flex; align-items: center; }
.tabs .src { width: 131px; padding-left: 9px; gap: 6px; }
.tabs .t56 { width: 56px; padding-left: 6px; } .tabs .t63 { width: 63px; }
.tabs .active { background: #fafafa; font-weight: 700; color: #444; padding: 0 0 2px 5px; letter-spacing: -.1px; }
.tabs .dash { width: 104px; gap: 5px; padding-left: 7px; letter-spacing: -.06px; } .tabs .first { width: 102px; letter-spacing: -.2px; }
.tabs .story { width: 71px; gap: 4px; padding-left: 6px; }
.tabs .add { width: 32px; padding-left: 9px; }

/* Status line */
.status { height: 20px; flex: none; display: flex; background: #eaeaea; font-size: 11px; line-height: 19px; color: #222; white-space: nowrap; }
.s1 { width: 65px; padding-left: 3px; letter-spacing: -.1px; } .s2 { width: 106px; letter-spacing: -.28px; } .s3 { width: 829px; border-right: 1px solid #c8c8c8; }
.status > i { border-right: 1px solid #c8c8c8; }
.b1 { width: 127px; } .b2 { width: 27px; } .b3 { width: 27px; } .b4 { width: 47px; }
.nav { width: 71px; border-right: 1px solid #c8c8c8; padding: 5px 0 0 8px; }
.modes { padding: 4px 0 0 8px; }

/* Taskbar */
.taskbar { height: 40px; flex: none; display: flex; background: linear-gradient(90deg, #0c0c14 0, #08080b 30%, #0c0a0c 60%, #28121c 66%, #38151f 69.500%, #28121c 76%, #170e12 86%, #090a0c 94%); color: #fff; }
.start { width: 48px; display: grid; place-items: center; }
.tsearch { width: 344px; background: #f2f2f2; color: #333; display: flex; align-items: center; padding: 0 15px 0 9px; font-size: 14.400px; letter-spacing: -.2px; }
.tsearch span { margin: 0 auto 0 9px; }
.mic { color: #222; }
.app { width: 49.3px; display: grid; place-items: center; }
.edge { padding-left: 3px; }
.current { width: 48px; background: #3a3b40; border-bottom: 2px solid #76b9ed; }
.current b { width: 22px; height: 22px; background: #f2f5f8; display: grid; place-items: center; }
.tray { flex: 1; display: flex; align-items: center; }
.people { margin-left: 319px; } .up { margin-left: 22px; } .bat { margin-left: 12px; } .vol { margin-left: 8px; }
.lang { margin-left: 9px; width: 26px; letter-spacing: -.3px; }
.clock { width: 72px; margin-left: 4px; text-align: center; font-size: 11.500px; line-height: 18px; letter-spacing: -.25px; padding-bottom: 1px; }
.note { margin-left: 10px; }
.peek { width: 1px; height: 40px; margin-left: 20px; background: #555; }
```
